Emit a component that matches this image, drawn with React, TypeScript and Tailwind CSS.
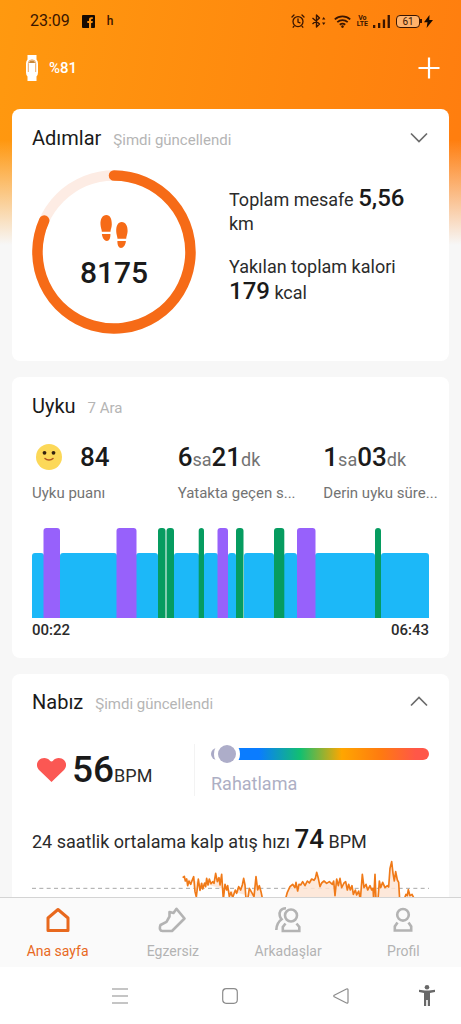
import React from "react";

type Bar = { x: number; w: number; kind: "light" | "deep" | "rem" };

const sleepBars: Bar[] = [
  { x: 0, w: 12, kind: "light" },
  { x: 28, w: 57, kind: "light" },
  { x: 104, w: 22, kind: "light" },
  { x: 142, w: 25, kind: "light" },
  { x: 172, w: 14, kind: "light" },
  { x: 196, w: 8, kind: "light" },
  { x: 212, w: 30, kind: "light" },
  { x: 252, w: 13, kind: "light" },
  { x: 283, w: 60, kind: "light" },
  { x: 349, w: 48, kind: "light" },
  { x: 11.5, w: 16.5, kind: "rem" },
  { x: 84.5, w: 20, kind: "rem" },
  { x: 126, w: 7.5, kind: "deep" },
  { x: 134.5, w: 7.5, kind: "deep" },
  { x: 166.7, w: 5.3, kind: "deep" },
  { x: 185.5, w: 10.5, kind: "rem" },
  { x: 204, w: 7.5, kind: "deep" },
  { x: 242, w: 10.3, kind: "deep" },
  { x: 265, w: 18.5, kind: "rem" },
  { x: 343, w: 6, kind: "deep" },
];

const barFill = { light: "#1cb8f8", deep: "#069c60", rem: "#9761fb" };

const pulseRuns = [
  "38,68 43,64 46,78 50,72 53,92 57,78 62,88 68,72 71,65 75,110 79,126 85,72 90,106 95,85 98,102 104,84 107,95 110,70 114,90 118,72 123,86 128,80 132,85 137,55 142,80 147,68 150,90 155,58 160,134 165,88 170,105 173,92 178,125 183,112 188,128 196,105 200,115 206,95 212,105 217,90 221,70 225,90 228,134 233,134 238,100 245,112 252,125 258,65 263,105 268,92 273,110 278,134",
  "346,134 352,112 360,95 368,88 375,98 378,82 383,108 387,88 392,90 398,80 405,92 412,78 418,84 425,72 432,76 436,70 440,52 445,70 450,95 455,84 462,78 470,85 478,80 487,88 491,78 495,122 500,72 505,92 510,70 515,98 522,84 527,80 532,105 536,88 541,105 546,92 550,118 556,105 560,120 566,108 571,134 577,58 582,98 588,88 593,105 600,92 605,105 609,100 611,134 615,58 618,134 624,134 628,78 632,98 638,82 645,98 652,92 656,96 660,40 665,20 669,55 673,78 677,50 682,75 686,82 689,134",
  "702,134 708,118 712,122 715,104 720,122 726,118 734,134",
];

function StatusBar() {
  return (
    <div className="flex h-[42px] items-center pl-[30px] pr-7 text-[#3a1500]">
      <span className="text-base">23:09</span>
      <svg className="ml-3 h-[13px] w-[13px]" viewBox="0 0 13 13" aria-hidden="true">
        <rect width="13" height="13" rx="1" fill="#160a02" />
        <path d="M7 13V8H5.3V6H7V4.6C7 3 8 2.2 9.4 2.2h1.4v1.9H9.9c-.6 0-.8.3-.8.8V6h1.7l-.3 2H9.1v5z" fill="#ff930f" />
      </svg>
      <span className="ml-3 text-xs font-medium">h</span>
      <div className="ml-auto flex items-center">
        <svg className="h-[14px] w-[14px]" viewBox="0 0 14 14" fill="none" stroke="currentColor" strokeWidth="1.3" strokeLinecap="round" aria-hidden="true">
          <circle cx="7" cy="7.6" r="5" />
          <path d="M7 5v3l2 .8M1 3l2-2M13 3l-2-2M3 12.2l-.8 1M11 12.2l.8 1" />
        </svg>
        <svg className="ml-[6px] h-[14px] w-[15px]" viewBox="0 0 15 14" fill="none" stroke="currentColor" strokeWidth="1.4" strokeLinejoin="round" aria-hidden="true">
          <path d="M1.500 4l7 6-3 3V1l3 3-7 6" />
          <path d="M11 5.500l1.700-2.500 1.700 2.500zM11 8.500l1.700 2.500 1.700-2.500z" fill="currentColor" stroke="none" />
        </svg>
        <svg className="ml-[8px] h-[13px] w-[17px]" viewBox="0 0 17 13" fill="none" stroke="currentColor" strokeWidth="1.8" aria-hidden="true">
          <path d="M.8 4.3c4.4-4 11-4 15.4 0M3.3 7.2c3-2.7 7.400-2.700 10.400 0M5.800 9.800c1.600-1.400 3.800-1.400 5.400 0" />
          <circle cx="8.500" cy="11.600" r="1.300" fill="currentColor" stroke="none" />
        </svg>
        <span className="ml-[6px] flex flex-col text-center text-[7px] leading-[6px] font-bold">
          <span>Vo</span>
          <span>LTE</span>
        </span>
        <svg className="ml-[5px] h-[13px] w-[17px]" viewBox="0 0 17 13" fill="currentColor" aria-hidden="true">
          <path d="M0 10h2.300v3H0zM5 8h2.300v5H5zM9.800 4.500h2.300V13H9.800zM14.600 0h2.300v13h-2.300z" />
        </svg>
        <span className="ml-[6px] flex h-[13px] w-6 items-center justify-center rounded border border-current bg-[#ffb26b] text-[10px]">61</span>
        <span className="h-1 w-[2px] bg-current" />
        <svg className="ml-[2px] h-[13px] w-[9px]" viewBox="0 0 9 13" fill="#160a02" aria-hidden="true">
          <path d="M5.500 0L0 7.300h3.500L2.600 13 9 5H5.300z" />
        </svg>
      </div>
    </div>
  );
}

function CardTitle({ title, note, children }: { title: string; note: string; children?: React.ReactNode }) {
  return (
    <header className="flex h-7 items-center justify-between">
      <div className="flex items-baseline gap-3">
        <h2 className="text-xl">{title}</h2>
        <span className="text-[15px] text-[#b5b5b5]">{note}</span>
      </div>
      {children}
    </header>
  );
}

function Chevron({ up, label }: { up?: boolean; label: string }) {
  return (
    <button type="button" aria-label={label} className="text-[#6b6b6b]">
      <svg className="h-5 w-5" viewBox="0 0 20 20" fill="none" stroke="currentColor" strokeWidth="1.7" aria-hidden="true">
        <path d={up ? "M2 13.5L10 5.5L18 13.5" : "M2 5.5L10 13.5L18 5.5"} />
      </svg>
    </button>
  );
}

function StepsCard() {
  return (
    <section className="rounded-lg bg-white px-5 pt-[15px] pb-[27px]">
      <CardTitle title="Adımlar" note="Şimdi güncellendi">
        <Chevron label="Adımlar ayrıntısı" />
      </CardTitle>
      <div className="mt-[18px] flex gap-[33px]">
        <div className="relative h-[164px] w-[164px] shrink-0">
          <svg className="h-full w-full" viewBox="0 0 164 164" fill="none" strokeWidth="10.5" aria-hidden="true">
            <circle cx="82" cy="82" r="76.5" stroke="#fdece4" />
            <path d="M82 5.5A76.5 76.5 0 1 1 12.2 50.6" stroke="#f66b17" strokeLinecap="round" />
          </svg>
          <div className="absolute inset-0 flex flex-col items-center pt-[45px]">
            <svg className="h-[34px] w-[28px]" viewBox="0 0 28 34" fill="#f66b17" aria-hidden="true">
              <path d="M6.400 0C2.400 0 .2 4 .5 9.500c.1 3 1.300 5 1.300 7.300h8.700c0-2.300 1.300-4.300 1.300-7.300C11.900 4 10.200 0 6.400 0zM1.900 19h8.500c.2 4-1.100 7-3.500 7s-4.600-3-5-7z" />
              <path d="M21.700 7c-3.800 0-5.600 4-5.500 9.300 0 3 1.200 5 1.300 7.400h8.700c.1-2.400 1.300-4.400 1.400-7.400C27.800 11 25.600 7 21.700 7zM17.400 26h8.500c-.3 4-2.500 7-4.900 7s-3.700-3-3.600-7z" />
            </svg>
            <strong className="mt-2 text-[30px] leading-8 font-medium">8175</strong>
          </div>
        </div>
        <div className="flex flex-col gap-[19px] pt-4 text-lg text-[#2b2b2b]">
          <p className="leading-6">
            Toplam mesafe <strong className="text-2xl leading-6 font-medium text-[#1a1a1a]">5,56</strong> km
          </p>
          <p className="leading-6">
            Yakılan toplam kalori <strong className="text-2xl leading-6 font-medium text-[#1a1a1a]">179</strong> kcal
          </p>
        </div>
      </div>
    </section>
  );
}

function Duration({ hours, minutes, label }: { hours: string; minutes: string; label: string }) {
  return (
    <div className="pl-5">
      <p className="h-8 text-lg leading-8 whitespace-nowrap text-[#737373]">
        <strong className="text-[26px] font-medium text-[#1a1a1a]">{hours}</strong>sa
        <strong className="text-[26px] font-medium text-[#1a1a1a]">{minutes}</strong>dk
      </p>
      <p className="mt-2 text-[15px] leading-6 whitespace-nowrap text-[#737373]">{label}</p>
    </div>
  );
}

function SleepCard() {
  return (
    <section className="rounded-lg bg-white pt-[15px] pb-[17px]">
      <div className="px-5">
        <CardTitle title="Uyku" note="7 Ara" />
      </div>
      <div className="mt-[21px] grid grid-cols-3">
        <div className="pl-5">
          <p className="flex h-8 items-center">
            <svg className="ml-1 h-[26px] w-[26px]" viewBox="0 0 26 26" aria-hidden="true">
              <circle cx="13" cy="13" r="13" fill="#fcd858" />
              <circle cx="8.500" cy="8.800" r="1.900" fill="#33210f" />
              <circle cx="17.500" cy="8.800" r="1.900" fill="#33210f" />
              <path d="M9 14.500c2 2 6 2 8 0" fill="none" stroke="#b0531f" strokeWidth="1.500" strokeLinecap="round" />
            </svg>
            <strong className="ml-[18px] text-[26px] font-medium">84</strong>
          </p>
          <p className="mt-2 text-[15px] leading-6 text-[#737373]">Uyku puanı</p>
        </div>
        <Duration hours="6" minutes="21" label="Yatakta geçen s..." />
        <Duration hours="1" minutes="03" label="Derin uyku süre..." />
      </div>
      <div className="mt-[23px] px-5">
        <svg className="h-[90px] w-full" viewBox="0 0 397 90" preserveAspectRatio="none" role="img" aria-label="Uyku">
          {sleepBars.map((b) => {
            const top = b.kind === "light" ? 25 : 0;
            const r = Math.min(3, b.w / 2);
            return (
              <path
                key={b.x}
                fill={barFill[b.kind]}
                d={`M${b.x} 90V${top + r}q0 ${-r} ${r} ${-r}h${b.w - 2 * r}q${r} 0 ${r} ${r}V90z`}
              />
            );
          })}
        </svg>
        <div className="mt-[1px] flex justify-between text-[15px] leading-[22px] font-medium text-[#2b2b2b]">
          <span>00:22</span>
          <span>06:43</span>
        </div>
      </div>
    </section>
  );
}

function PulseCard() {
  return (
    <section className="rounded-lg bg-white px-5 pt-[14px] pb-5">
      <CardTitle title="Nabız" note="Şimdi güncellendi">
        <Chevron up label="Nabız ayrıntısı" />
      </CardTitle>
      <div className="mt-7 flex">
        <div className="flex h-[52px] w-[163px] shrink-0 items-center border-r border-[#f3f3f3]">
          <svg className="ml-[5px] h-6 w-[29px]" viewBox="0 0 29 24" fill="#fb5753" aria-hidden="true">
            <path d="M14.500 24L2.300 12.200C-.8 9-.7 4.800 1.800 2.200 5-.9 10.600-.6 13 2.800c.6.900 2.400.9 3 0C18.400-.6 24-.9 27.200 2.200c2.500 2.600 2.600 6.800-.5 10z" />
          </svg>
          <p className="ml-[6px] flex items-baseline">
            <strong className="text-[37px] leading-[54px] font-medium">56</strong>
            <span className="text-lg text-[#2b2b2b]">BPM</span>
          </p>
        </div>
        <div className="ml-4 flex-1 pt-1">
          <div className="relative h-3 rounded-full bg-[linear-gradient(to_right,#a9a9c6_0%,#a9a9c6_6%,#0a7cff_13%,#0a7cff_22%,#12bf70_41%,#ffa600_60%,#ff7a10_78%,#ff5748_94%)]">
            <span className="absolute -top-[3px] left-[7px] h-[18px] w-[18px] rounded-full bg-[#adadc9] ring-4 ring-white" />
          </div>
          <p className="mt-3 text-lg leading-6 text-[#adafc4]">Rahatlama</p>
        </div>
      </div>
      <p className="mt-[27px] text-lg leading-8 text-[#2b2b2b]">
        24 saatlik ortalama kalp atış hızı <strong className="text-[26px] font-medium text-[#1a1a1a]">74</strong> BPM
      </p>
      <svg className="mt-[2px] h-[60px] w-full" viewBox="-414 15 1191 180" preserveAspectRatio="none" role="img" aria-label="Nabız">
        <path d="M-414 100H777" stroke="#a8a8a8" strokeWidth="3" strokeDasharray="12 10" />
        {pulseRuns.map((run) => (
          <polyline key={run} points={run} fill="#fde4d3" fillOpacity="0.85" stroke="#f07a18" strokeWidth="5" strokeLinejoin="round" />
        ))}
      </svg>
    </section>
  );
}

function TabBar() {
  const tab = "flex h-[69px] flex-col items-center pt-[9px] text-sm text-[#b3b3b3]";
  return (
    <nav className="grid shrink-0 grid-cols-4 border-t border-[#d4d4d4] bg-[#fafafa]">
      <a href="#home" aria-current="page" className="flex h-[69px] flex-col items-center pt-[9px] text-sm text-[#e8691e]">
        <svg className="h-[26px] w-[30px]" viewBox="0 0 30 26" fill="none" stroke="currentColor" strokeWidth="3" strokeLinejoin="round" aria-hidden="true">
          <path d="M5 11L15 2.500L25 11V23.500H5z" />
        </svg>
        <span className="mt-2">Ana sayfa</span>
      </a>
      <a href="#workout" className={tab}>
        <svg className="h-[26px] w-[30px]" viewBox="0 0 30 26" fill="none" stroke="currentColor" strokeWidth="2.600" strokeLinejoin="round" aria-hidden="true">
          <path d="M18.500 1.800L26.500 11.500L14 24H4.500C2 24 1.200 21.500 2.500 18L8.500 14.800L11.500 9.500V5L15.500 6z" />
        </svg>
        <span className="mt-2">Egzersiz</span>
      </a>
      <a href="#friends" className={tab}>
        <svg className="h-[26px] w-[30px]" viewBox="0 0 30 26" fill="none" stroke="currentColor" strokeWidth="2.600" aria-hidden="true">
          <circle cx="18" cy="8.500" r="6" />
          <path d="M12.500 16.500L9.800 20v4h16.500v-4l-2.800-3.500M13 1.300C7.500 1.300 5.800 5 6.800 9c.4 1.500 1 2.300 1.800 3.300C5.500 14.500 3.500 18 3.300 23" />
        </svg>
        <span className="mt-2">Arkadaşlar</span>
      </a>
      <a href="#profile" className={tab}>
        <svg className="h-[26px] w-[30px]" viewBox="0 0 30 26" fill="none" stroke="currentColor" strokeWidth="2.600" aria-hidden="true">
          <circle cx="15" cy="7.800" r="5.800" />
          <path d="M9.500 15.500L6.800 19.500v4h16.400v-4l-2.700-4" />
        </svg>
        <span className="mt-2">Profil</span>
      </a>
    </nav>
  );
}

function SystemBar() {
  return (
    <div className="grid h-[57px] shrink-0 grid-cols-[14fr_24fr_24fr_24fr_14fr] bg-white text-[#8c8c8c]">
      <span />
      <button type="button" aria-label="Menü" className="flex items-center justify-center">
        <svg className="h-4 w-4" viewBox="0 0 16 16" stroke="currentColor" strokeWidth="1.200" aria-hidden="true">
          <path d="M0 1h16M0 8h16M0 15h16" />
        </svg>
      </button>
      <button type="button" aria-label="Ana ekran" className="flex items-center justify-center">
        <svg className="h-4 w-4" viewBox="0 0 16 16" fill="none" stroke="currentColor" strokeWidth="1.200" aria-hidden="true">
          <rect x="0.700" y="0.700" width="14.600" height="14.600" rx="3.500" />
        </svg>
      </button>
      <button type="button" aria-label="Geri" className="flex items-center justify-center">
        <svg className="h-4 w-4" viewBox="0 0 16 16" fill="none" stroke="currentColor" strokeWidth="1.200" strokeLinejoin="round" aria-hidden="true">
          <path d="M1.200 7.200L13.500 1q1.500-.5 1.500 1V14q0 1.500-1.500 1L1.200 8.800q-.8-.8 0-1.600z" />
        </svg>
      </button>
      <button type="button" aria-label="Erişilebilirlik" className="flex items-center justify-center pr-1 text-[#686868]">
        <svg className="h-[21px] w-4" viewBox="0 0 16 21" fill="currentColor" aria-hidden="true">
          <circle cx="8" cy="2.300" r="2.300" />
          <path d="M0 4.800l6 .8h4l6-.8v2.200l-5 1V21H8.800v-6H7.200v6H5V8L0 7z" />
        </svg>
      </button>
    </div>
  );
}

export default function App() {
  return (
    <div className="flex h-screen flex-col bg-[#f7f7f7] font-[Roboto,sans-serif] text-[#1a1a1a]">
      <main className="min-h-0 flex-1 overflow-y-auto bg-[linear-gradient(to_bottom,#f7f7f700_140px,#f7f7f7_245px),linear-gradient(100deg,#ff990f,#ff860e_55%,#ff7610)] [scrollbar-width:none]">
        <StatusBar />
        <header className="flex h-[52px] items-center justify-between pr-5 pl-[26px] text-white">
          <div className="flex items-center gap-[11px]">
            <svg className="h-[26px] w-3" viewBox="0 0 12 26" aria-hidden="true">
              <path d="M1.500 0h9v4.500Q12 6 12 8.500v9q0 2.500-1.500 4V26h-9v-4.500Q0 20 0 17.500v-9Q0 6 1.500 4.500z" fill="#fff" />
              <path d="M2.300 17V8.500Q2.300 4.800 6 4.800t3.700 3.700V17" fill="none" stroke="#f0a860" strokeWidth="1" />
              <path d="M3 8q.3-2.600 3-2.600T9 8z" fill="#c9893c" />
            </svg>
            <span className="text-[15px] font-medium">%81</span>
          </div>
          <button type="button" aria-label="Ekle">
            <svg className="h-6 w-6" viewBox="0 0 24 24" stroke="currentColor" strokeWidth="2.200" aria-hidden="true">
              <path d="M1.500 12h21M12 1.500v21" />
            </svg>
          </button>
        </header>
        <div className="flex flex-col gap-4 px-3 pt-[15px]">
          <StepsCard />
          <SleepCard />
          <PulseCard />
        </div>
      </main>
      <TabBar />
      <SystemBar />
    </div>
  );
}
